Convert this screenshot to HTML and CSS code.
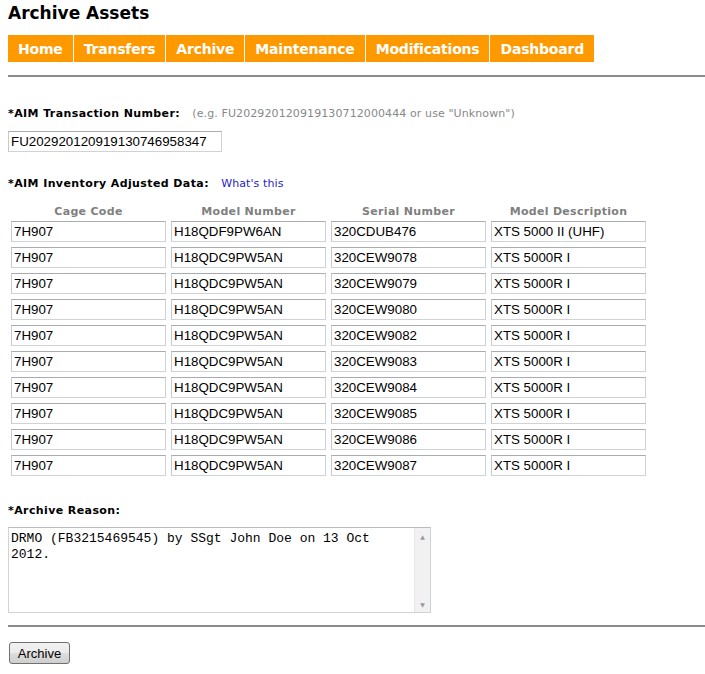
FILE: index.html
```
<!DOCTYPE html>
<html>
<head>
<meta charset="utf-8">
<title>Archive Assets</title>
<link rel="stylesheet" href="styles.css">
</head>
<body>
<div class="page">
  <h1 class="title">Archive Assets</h1>
  <nav class="nav">
    <a class="nav-item" href="#">Home</a>
    <a class="nav-item" href="#">Transfers</a>
    <a class="nav-item" href="#">Archive</a>
    <a class="nav-item" href="#">Maintenance</a>
    <a class="nav-item" href="#">Modifications</a>
    <a class="nav-item" href="#">Dashboard</a>
  </nav>
  <div class="rule"></div>

  <div class="label label-first">*AIM Transaction Number: <span class="hint">(e.g. FU202920120919130712000444 or use "Unknown")</span></div>
  <input class="field txn" type="text" value="FU202920120919130746958347">

  <div class="label label-second">*AIM Inventory Adjusted Data: <a class="link" href="#">What's this</a></div>

  <div class="grid">
    <div class="col-head">Cage Code</div>
    <div class="col-head">Model Number</div>
    <div class="col-head">Serial Number</div>
    <div class="col-head">Model Description</div>

    <input class="field cell" value="7H907"><input class="field cell" value="H18QDF9PW6AN"><input class="field cell" value="320CDUB476"><input class="field cell" value="XTS 5000 II (UHF)">
    <input class="field cell" value="7H907"><input class="field cell" value="H18QDC9PW5AN"><input class="field cell" value="320CEW9078"><input class="field cell" value="XTS 5000R I">
    <input class="field cell" value="7H907"><input class="field cell" value="H18QDC9PW5AN"><input class="field cell" value="320CEW9079"><input class="field cell" value="XTS 5000R I">
    <input class="field cell" value="7H907"><input class="field cell" value="H18QDC9PW5AN"><input class="field cell" value="320CEW9080"><input class="field cell" value="XTS 5000R I">
    <input class="field cell" value="7H907"><input class="field cell" value="H18QDC9PW5AN"><input class="field cell" value="320CEW9082"><input class="field cell" value="XTS 5000R I">
    <input class="field cell" value="7H907"><input class="field cell" value="H18QDC9PW5AN"><input class="field cell" value="320CEW9083"><input class="field cell" value="XTS 5000R I">
    <input class="field cell" value="7H907"><input class="field cell" value="H18QDC9PW5AN"><input class="field cell" value="320CEW9084"><input class="field cell" value="XTS 5000R I">
    <input class="field cell" value="7H907"><input class="field cell" value="H18QDC9PW5AN"><input class="field cell" value="320CEW9085"><input class="field cell" value="XTS 5000R I">
    <input class="field cell" value="7H907"><input class="field cell" value="H18QDC9PW5AN"><input class="field cell" value="320CEW9086"><input class="field cell" value="XTS 5000R I">
    <input class="field cell" value="7H907"><input class="field cell" value="H18QDC9PW5AN"><input class="field cell" value="320CEW9087"><input class="field cell" value="XTS 5000R I">
  </div>

  <div class="label label-third">*Archive Reason:</div>
  <div class="memo">
    <textarea class="memo-text">DRMO (FB3215469545) by SSgt John Doe on 13 Oct 2012.</textarea>
    <div class="memo-scroll">
      <span class="arrow">&#9650;</span>
      <span class="arrow">&#9660;</span>
    </div>
  </div>

  <div class="rule rule-bottom"></div>
  <button class="btn" type="button">Archive</button>
</div>
</body>
</html>
```
FILE: styles.css
```
html, body {
  margin: 0;
  padding: 0;
  background: #fff;
}

.page {
  padding: 3px 0 8px 8px;
  font-family: "DejaVu Sans", Verdana, sans-serif;
  color: #000;
}

.title {
  margin: 0;
  font-size: 17px;
  line-height: 20px;
  font-weight: bold;
}

.nav {
  display: flex;
  margin-top: 12px;
  width: max-content;
  background: #ff9900;
}

.nav-item {
  display: block;
  height: 27px;
  line-height: 28px;
  padding: 0 10px;
  border-right: 1px solid #fff;
  color: #fff;
  font-size: 14px;
  letter-spacing: -0.2px;
  font-weight: bold;
  text-decoration: none;
  background: #ff9900;
}

.nav-item:last-child {
  border-right: none;
}

.rule {
  margin-top: 13px;
  height: 0;
  border-top: 2px solid #8c8c8c;
}

.label {
  font-size: 11px;
  line-height: 14px;
  font-weight: bold;
  letter-spacing: 0.4px;
}

.label-first { margin-top: 30px; }
.label-second { margin-top: 25px; }
.label-third { margin-top: 28px; }

.hint {
  font-weight: normal;
  letter-spacing: 0.1px;
  color: #888;
  margin-left: 8px;
}

.link {
  font-weight: normal;
  letter-spacing: 0.1px;
  color: #2424c8;
  text-decoration: none;
  margin-left: 8px;
}

.field {
  box-sizing: border-box;
  height: 21px;
  margin: 0;
  padding: 0 2px;
  border: 1px solid #cfd3d8;
  border-top-color: #a8abb2;
  border-left-color: #c6c9ce;
  font-family: "Liberation Sans", Arial, sans-serif;
  font-size: 13.33px;
  color: #000;
  background: #fff;
  outline: none;
}

.txn {
  display: block;
  width: 214px;
  margin-top: 10px;
}

.grid {
  display: grid;
  grid-template-columns: repeat(4, 155px);
  column-gap: 5px;
  row-gap: 5px;
  margin-top: 14px;
  margin-left: 3px;
}

.col-head {
  text-align: center;
  font-size: 11px;
  line-height: 14px;
  font-weight: bold;
  letter-spacing: 0.3px;
  color: #7f7f7f;
  margin-bottom: -3px;
}

.cell {
  width: 155px;
}

.memo {
  display: flex;
  box-sizing: border-box;
  width: 423px;
  height: 86px;
  margin-top: 9px;
  border: 1px solid #cfd3d8;
  border-top-color: #b8bbc1;
}

.memo-text {
  flex: 1;
  box-sizing: border-box;
  height: 100%;
  margin: 0;
  padding: 3px 2px 2px 2px;
  border: none;
  outline: none;
  resize: none;
  overflow: hidden;
  font-family: "Liberation Mono", "Courier New", monospace;
  font-size: 13px;
  line-height: 16px;
  color: #000;
}

.memo-scroll {
  display: flex;
  flex-direction: column;
  justify-content: space-between;
  width: 16px;
  padding: 6px 0 4px;
  box-sizing: border-box;
  background: #f1f1f1;
  border-left: 1px solid #e6e6e6;
}

.arrow {
  display: block;
  text-align: center;
  font-size: 6px;
  line-height: 6px;
  color: #9a9a9a;
}

.rule-bottom {
  margin-top: 12px;
}

.btn {
  display: block;
  margin: 15px 0 0 1px;
  box-sizing: border-box;
  width: 61px;
  height: 22px;
  padding: 0;
  border: 1px solid #707070;
  border-radius: 3px;
  background: linear-gradient(#f2f2f2 0%, #ebebeb 48%, #dddddd 52%, #cfcfcf 100%);
  font-family: "Liberation Sans", Arial, sans-serif;
  font-size: 13px;
  color: #000;
}
```
